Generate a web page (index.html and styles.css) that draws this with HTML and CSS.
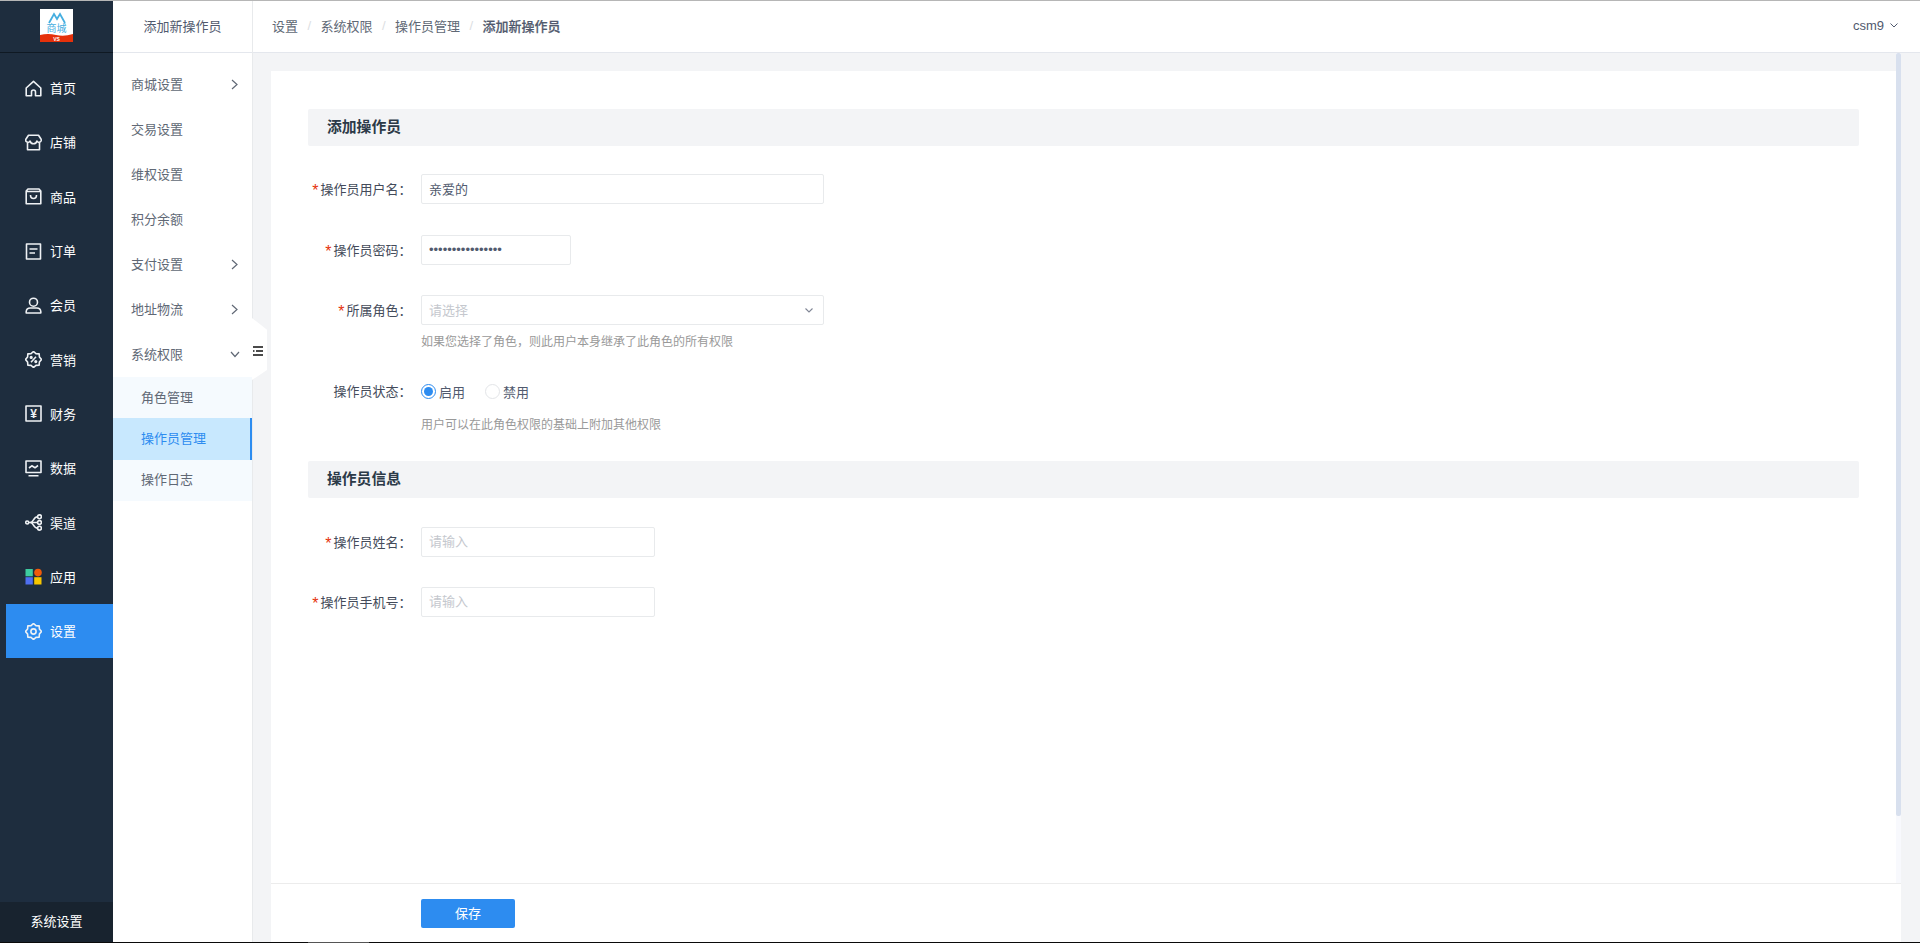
FILE: index.html
```html
<!DOCTYPE html>
<html lang="zh-CN">
<head>
<meta charset="utf-8">
<title>添加新操作员</title>
<link rel="stylesheet" href="styles.css">
</head>
<body>
<div class="frame-top"></div>
<div class="app">
  <aside class="rail">
    <div class="rail-head">
      <svg class="logo" viewBox="0 0 33 33">
        <rect width="33" height="33" fill="#fff"/>
        <path d="M9 14 L14 5 L17 10 L20 5 L25 14" fill="none" stroke="#45aee0" stroke-width="1.8"/>
        <text x="16.5" y="22.5" class="logo-cn">商城</text>
        <path d="M0 26 Q8 24 16 26 T33 25 V33 H0 Z" fill="#e5310b"/>
        <text x="16.5" y="31.5" class="logo-vs">VS</text>
      </svg>
    </div>
    <nav class="rail-nav">
      <a class="rail-item"><svg class="ico" viewBox="0 0 17 17"><path d="M1.2 8 L8.5 1.3 L15.8 8 V15.8 H10.5 V12 A2 2 0 0 0 6.5 12 V15.8 H1.2 Z"/></svg><span class="rail-text">首页</span></a>
      <a class="rail-item"><svg class="ico" viewBox="0 0 17 17"><path d="M3.5 1.2 H13.5 L16 5 A2.2 2.2 0 0 1 12 7 A3.6 3.6 0 0 1 5 7 A2.2 2.2 0 0 1 1 5 Z M2.5 8.5 V15.8 H14.5 V8.5"/></svg><span class="rail-text">店铺</span></a>
      <a class="rail-item"><svg class="ico" viewBox="0 0 17 17"><path d="M1.2 3 L3 1 H14 L15.8 3 V15.8 H1.2 Z M1.2 3.5 H15.8 M5.5 7 A3 3.5 0 0 0 11.5 7"/></svg><span class="rail-text">商品</span></a>
      <a class="rail-item"><svg class="ico" viewBox="0 0 17 17"><path d="M1.5 1 H15.5 V16 H1.5 Z M4.5 6 H12.5 M4.5 10 H10"/></svg><span class="rail-text">订单</span></a>
      <a class="rail-item"><svg class="ico" viewBox="0 0 17 17"><circle cx="8.5" cy="5.2" r="4"/><path d="M1.2 16 V14.5 A4 4 0 0 1 5.2 11 H11.8 A4 4 0 0 1 15.8 14.5 V16 Z"/></svg><span class="rail-text">会员</span></a>
      <a class="rail-item"><svg class="ico" viewBox="0 0 17 17"><path d="M16.5 8.5 L14.41 10.95 L14.16 14.16 L10.95 14.41 L8.5 16.5 L6.05 14.41 L2.84 14.16 L2.59 10.95 L.5 8.5 L2.59 6.05 L2.84 2.84 L6.05 2.59 L8.5 .5 L10.95 2.59 L14.16 2.84 L14.41 6.05 Z M6 11.2 L11 5.8"/><circle cx="6.2" cy="6.4" r="0.8"/><circle cx="10.8" cy="10.6" r="0.8"/></svg><span class="rail-text">营销</span></a>
      <a class="rail-item"><svg class="ico" viewBox="0 0 17 17"><path d="M1 1 H16 V16 H1 Z"/><text x="8.5" y="12.5" class="ico-yen">¥</text></svg><span class="rail-text">财务</span></a>
      <a class="rail-item"><svg class="ico" viewBox="0 0 17 17"><path d="M1 1 H16 V12.5 H1 Z M3.5 15.8 H13.5 M4 8 L6.8 5.8 L10 7.8 L13 5.5"/></svg><span class="rail-text">数据</span></a>
      <a class="rail-item"><svg class="ico" viewBox="0 0 17 17"><circle cx="2.2" cy="8.5" r="1.5"/><circle cx="14.5" cy="2.8" r="1.9"/><circle cx="14.5" cy="8.5" r="1.9"/><circle cx="14.5" cy="14.2" r="1.9"/><path d="M3.7 8.5 H12.6 M12.6 2.8 C8 2.8 9 8.5 5 8.5 M12.6 14.2 C8 14.2 9 8.5 5 8.5"/></svg><span class="rail-text">渠道</span></a>
      <a class="rail-item"><svg class="ico ico-app" viewBox="0 0 17 17"><rect class="c1" x="0.5" y="1" width="7.3" height="7.3"/><circle class="c2" cx="13" cy="4.6" r="3.8"/><rect class="c3" x="0.5" y="9.2" width="7.3" height="7.3"/><rect class="c4" x="9.2" y="9.2" width="7.3" height="7.3"/></svg><span class="rail-text">应用</span></a>
      <a class="rail-item is-active"><svg class="ico" viewBox="0 0 17 17"><path d="M16.5 8.5 L14.41 10.95 L14.16 14.16 L10.95 14.41 L8.5 16.5 L6.05 14.41 L2.84 14.16 L2.59 10.95 L.5 8.5 L2.59 6.05 L2.84 2.84 L6.05 2.59 L8.5 .5 L10.95 2.59 L14.16 2.84 L14.41 6.05 Z"/><circle cx="8.5" cy="8.5" r="2.6"/></svg><span class="rail-text">设置</span></a>
    </nav>
    <div class="rail-foot">系统设置</div>
  </aside>

  <aside class="side">
    <div class="side-head">添加新操作员</div>
    <ul class="side-menu">
      <li class="side-row"><span class="row-text">商城设置</span><svg class="chev" viewBox="0 0 7 11"><path d="M1 1 L6 5.5 L1 10"/></svg></li>
      <li class="side-row"><span class="row-text">交易设置</span></li>
      <li class="side-row"><span class="row-text">维权设置</span></li>
      <li class="side-row"><span class="row-text">积分余额</span></li>
      <li class="side-row"><span class="row-text">支付设置</span><svg class="chev" viewBox="0 0 7 11"><path d="M1 1 L6 5.5 L1 10"/></svg></li>
      <li class="side-row"><span class="row-text">地址物流</span><svg class="chev" viewBox="0 0 7 11"><path d="M1 1 L6 5.5 L1 10"/></svg></li>
      <li class="side-row"><span class="row-text">系统权限</span><svg class="chev-down" viewBox="0 0 10 7"><path d="M1 1 L5 5.5 L9 1"/></svg></li>
      <li class="sub-row"><span class="row-text">角色管理</span></li>
      <li class="sub-row is-current"><span class="row-text">操作员管理</span></li>
      <li class="sub-row"><span class="row-text">操作日志</span></li>
    </ul>
    <div class="side-handle">
      <svg class="handle-ico" viewBox="0 0 10 10"><path d="M0 1 H10 M3 5 H10 M0 5 H1.5 M0 9 H10"/></svg>
    </div>
  </aside>

  <div class="main">
    <header class="topbar">
      <div class="crumbs">
        <span>设置</span><i class="crumb-sep">/</i>
        <span>系统权限</span><i class="crumb-sep">/</i>
        <span>操作员管理</span><i class="crumb-sep">/</i>
        <span class="crumb-now">添加新操作员</span>
      </div>
      <div class="user">csm9<svg class="user-chev" viewBox="0 0 8 5"><path d="M0.5 0.5 L4 4 L7.5 0.5"/></svg></div>
    </header>
    <div class="body-wrap">
      <div class="scroller">
        <div class="pane">
          <form class="card">
            <h2 class="section">添加操作员</h2>
            <div class="field field-first">
              <label class="label is-req">操作员用户名：</label>
              <input class="input w-l" type="text" value="亲爱的">
            </div>
            <div class="field">
              <label class="label is-req">操作员密码：</label>
              <input class="input w-s" type="password" value="1234567890123456">
            </div>
            <div class="field field-select">
              <label class="label is-req">所属角色：</label>
              <div class="input w-l select"><span class="ph">请选择</span><svg class="sel-chev" viewBox="0 0 8 5"><path d="M0.5 0.5 L4 4 L7.5 0.5"/></svg></div>
            </div>
            <p class="hint">如果您选择了角色，则此用户本身继承了此角色的所有权限</p>
            <div class="field field-radio">
              <label class="label">操作员状态：</label>
              <div class="radios">
                <span class="radio-opt"><i class="radio is-on"></i>启用</span>
                <span class="radio-opt"><i class="radio"></i>禁用</span>
              </div>
            </div>
            <p class="hint hint-tight">用户可以在此角色权限的基础上附加其他权限</p>
            <h2 class="section section-second">操作员信息</h2>
            <div class="field field-next">
              <label class="label is-req">操作员姓名：</label>
              <input class="input w-m" type="text" placeholder="请输入">
            </div>
            <div class="field field-last">
              <label class="label is-req">操作员手机号：</label>
              <input class="input w-m" type="text" placeholder="请输入">
            </div>
          </form>
        </div>
        <div class="scrollbar"><div class="scrollbar-thumb"></div></div>
      </div>
      <footer class="actions"><button class="save" type="button">保存</button></footer>
    </div>
  </div>
</div>
<div class="frame-bottom"><span class="frame-thumb"></span></div>
</body>
</html>
```

FILE: styles.css
```css
* { box-sizing: border-box; }
html, body { height: 100%; }
body {
  margin: 0;
  height: 943px;
  overflow: hidden;
  display: flex;
  flex-direction: column;
  font-family: "Liberation Sans", "Noto Sans CJK SC", sans-serif;
  font-size: 13px;
  color: #515a6e;
  background: #f3f4f6;
}
.frame-top { height: 1px; background: #b6b6b6; flex: none; }
.frame-bottom { height: 1px; background: #0a0a0a; flex: none; display: flex; }
.frame-thumb { width: 61px; margin-left: 308px; background: #555; }
.app { flex: 1; display: flex; min-height: 0; }

/* dark rail */
.rail { width: 113px; flex: none; background: #1e2d3e; display: flex; flex-direction: column; color: #fff; }
.rail-head { height: 52px; flex: none; border-bottom: 1px solid #0f1923; display: flex; justify-content: center; padding-top: 8px; }
.logo { width: 33px; height: 33px; display: block; }
.logo-cn { font-size: 10px; fill: #45aee0; text-anchor: middle; }
.logo-vs { font-size: 5px; fill: #fff; text-anchor: middle; font-weight: 700; }
.rail-nav { flex: 1; padding-top: 8px; display: grid; grid-auto-rows: 54.3px; align-content: start; }
.rail-item { display: flex; align-items: center; padding-left: 25px; gap: 8px; font-size: 13px; color: #fff; }
.rail-item.is-active { background: #2d8cf0; margin-left: 6px; padding-left: 19px; }
.rail-text { margin-bottom: 1px; }
.ico { width: 17px; height: 17px; flex: none; fill: none; stroke: #eef1f4; stroke-width: 1.6; stroke-linejoin: round; }
.ico-yen { font-size: 12px; font-weight: 700; fill: #eef1f4; stroke: none; text-anchor: middle; }
.ico-app { stroke: none; }
.c1 { fill: #3ecb9f; }
.c2 { fill: #f05a0a; }
.c3 { fill: #4f6ff0; }
.c4 { fill: #f7c600; }
.rail-foot { height: 40px; flex: none; background: #18232f; display: flex; align-items: center; justify-content: center; padding-bottom: 3px; }

/* secondary menu */
.side { width: 140px; flex: none; background: #fff; border-right: 1px solid #e8eaec; position: relative; display: flex; flex-direction: column; }
.side-head { height: 52px; flex: none; border-bottom: 1px solid #e4e7ed; display: flex; align-items: center; justify-content: center; padding-bottom: 2px; color: #515a6e; }
.side-menu { list-style: none; margin: 0; padding: 9px 0 0; }
.side-row { height: 45px; display: flex; align-items: center; justify-content: space-between; padding: 0 14px 0 18px; color: #606875; }
.row-text { margin-bottom: 3px; }
.chev { width: 7px; height: 11px; fill: none; stroke: #606875; stroke-width: 1.2; margin-bottom: 1px; }
.chev-down { width: 10px; height: 7px; fill: none; stroke: #606875; stroke-width: 1.2; margin-right: -2px; }
.sub-row { height: 41.3px; display: flex; align-items: center; padding-left: 28px; background: #f5fafe; color: #606875; }
.sub-row.is-current { background: #c8e8fe; color: #2d8cf0; border-right: 2px solid #2d8cf0; }
.side-handle { position: absolute; left: 139px; top: 317px; width: 15px; height: 62px; background: #fff; clip-path: polygon(0 0, 100% 19%, 100% 84%, 0 100%); display: flex; align-items: center; padding-left: 1px; }
.handle-ico { width: 10px; height: 10px; fill: none; stroke: #4a4a4a; stroke-width: 2; margin-top: 3px; }

/* main */
.main { flex: 1; min-width: 0; display: flex; flex-direction: column; }
.topbar { height: 52px; flex: none; background: #fff; border-bottom: 1px solid #e4e7ed; display: flex; align-items: center; justify-content: space-between; padding: 0 22px 2px 19px; }
.crumbs { display: flex; align-items: center; color: #606875; }
.crumb-sep { width: 22.5px; text-align: center; font-style: normal; color: #dcdee2; }
.crumb-now { font-weight: 500; color: #515a6e; -webkit-text-stroke: 0.2px #515a6e; }
.user { display: flex; align-items: center; gap: 6px; color: #515a6e; }
.user-chev { width: 8px; height: 5px; fill: none; stroke: #515a6e; stroke-width: 1; }
.body-wrap { flex: 1; min-height: 0; display: flex; flex-direction: column; padding: 0 19px 0 18px; }
.scroller { flex: 1; min-height: 0; display: flex; }
.pane { flex: 1; min-width: 0; padding-top: 18px; overflow: hidden; }
.scrollbar { width: 5px; flex: none; background: #f8f9fd; }
.scrollbar-thumb { height: 763px; background: #d8e0ee; border-radius: 2px; }
.card { background: #fff; height: 100%; padding: 38px 37px 0; }
.section { margin: 0; height: 37px; line-height: 37px; padding-left: 19px; background: #f3f4f6; border-radius: 2px; font-size: 14.8px; font-weight: 700; color: #2c3a48; }
.section-second { margin-top: 27px; }
.field { display: flex; align-items: center; margin-top: 31px; }
.field-first { margin-top: 28px; }
.field-select { margin-top: 30px; }
.field-next { margin-top: 29px; }
.field-last { margin-top: 30px; }
.field-radio { margin-top: 25px; }
.label { width: 113px; flex: none; padding: 0 16px 2px 0; text-align: right; font-size: 13px; color: #444b5a; font-feature-settings: "halt"; white-space: nowrap; }
.is-req::before { content: "*"; display: inline-block; transform: translateY(2px); font-size: 16px; line-height: 1; color: #e5330b; margin-right: 2px; }
.input { height: 30px; border: 1px solid #e8eaec; border-radius: 2px; padding: 0 7px 2px; font: inherit; font-size: 13px; color: #515a6e; background: #fff; outline: none; display: block; }
.input::placeholder { color: #c5c8ce; }
.w-l { width: 403px; }
.w-m { width: 234px; }
.w-s { width: 150px; }
.select { display: flex; align-items: center; justify-content: space-between; padding: 0 10px 0 7px; }
.ph { color: #c5c8ce; margin-bottom: 2px; }
.sel-chev { width: 8px; height: 5px; fill: none; stroke: #808695; stroke-width: 1.1; }
.hint { margin: 8px 0 0 113px; font-size: 12px; line-height: 18px; color: #999; }
.hint-tight { margin-top: 10px; }
.radios { display: flex; align-items: center; height: 30px; gap: 20px; }
.radio-opt { display: flex; align-items: center; gap: 3px; font-size: 13px; color: #515a6e; }
.radio { width: 15px; height: 15px; border-radius: 50%; border: 1px solid #e3e5e8; background: #fff; display: block; position: relative; }
.radio.is-on { border-color: #2d8cf0; }
.radio.is-on::after { content: ""; position: absolute; inset: 2px; border-radius: 50%; background: #2d8cf0; }
.actions { height: 59px; flex: none; background: #fff; border-top: 1px solid #ececec; padding: 15px 0 0 150px; }
.save { width: 94px; height: 29px; border: 0; border-radius: 2px; background: #2d8cf0; color: #fff; font: inherit; font-size: 13px; padding: 0 0 2px; display: block; }
```
